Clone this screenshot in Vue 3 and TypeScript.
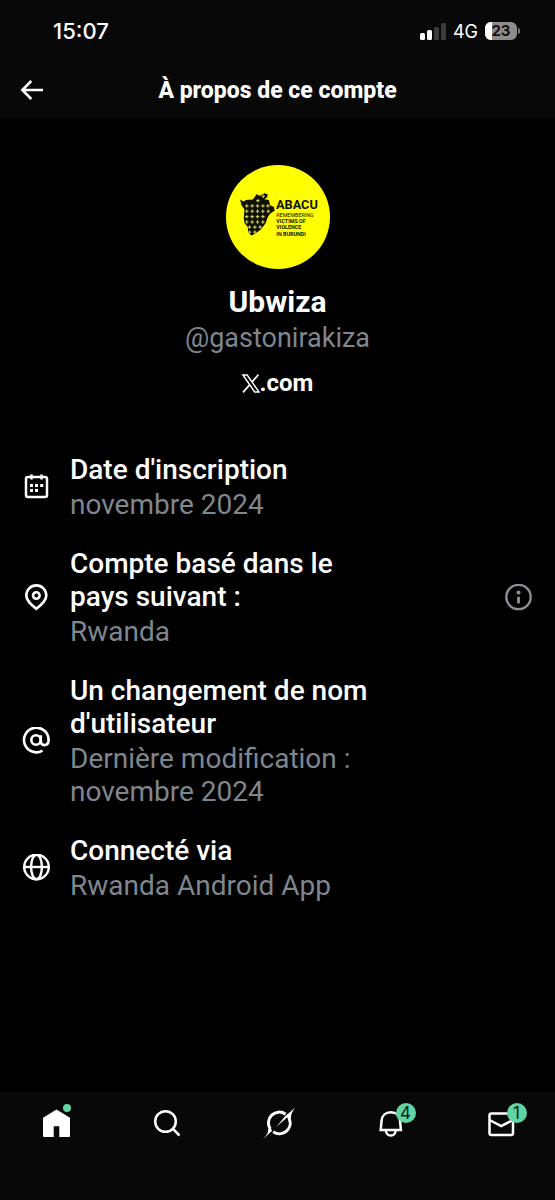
<script setup lang="ts">
interface Detail {
  icon: 'calendar' | 'pin' | 'at' | 'globe'
  title: string
  value: string
  info?: boolean
}

interface Tab {
  icon: 'home' | 'search' | 'grok' | 'bell' | 'mail'
  label: string
  badge?: number
  dot?: boolean
}

const details: Detail[] = [
  { icon: 'calendar', title: "Date d'inscription", value: 'novembre 2024' },
  { icon: 'pin', title: 'Compte basé dans le pays suivant :', value: 'Rwanda', info: true },
  { icon: 'at', title: "Un changement de nom d'utilisateur", value: 'Dernière modification : novembre 2024' },
  { icon: 'globe', title: 'Connecté via', value: 'Rwanda Android App' },
]

const tabs: Tab[] = [
  { icon: 'home', label: 'Accueil', dot: true },
  { icon: 'search', label: 'Recherche' },
  { icon: 'grok', label: 'Grok' },
  { icon: 'bell', label: 'Notifications', badge: 4 },
  { icon: 'mail', label: 'Messages', badge: 1 },
]

const battery = 23

// Centres of the small crosses printed over the map in the avatar
const crosses: [number, number][] = [
  [128, 135], [144, 122],
  [95, 151], [111, 151], [127, 151], [143, 151], [158, 151],
  [95, 167], [111, 167], [127, 167], [143, 167], [159, 167],
  [95, 183], [111, 183], [127, 183], [143, 183],
  [95, 199], [111, 199], [127, 199], [143, 199],
  [103, 214], [119, 214], [135, 214],
  [103, 229], [119, 229],
]
</script>

<template>
  <div class="screen">
    <header class="top">
      <div class="status">
        <time class="clock">15:07</time>
        <div class="signals">
          <svg class="bars" width="26" height="17" viewBox="0 0 26 17" aria-hidden="true">
            <rect x="0" y="10" width="5" height="7" rx="1.5" fill="#fff" />
            <rect x="7" y="7" width="5" height="10" rx="1.5" fill="#fff" />
            <rect x="14" y="4" width="5" height="13" rx="1.5" fill="#3c3c3c" />
            <rect x="21" y="0" width="5" height="17" rx="1.5" fill="#3c3c3c" />
          </svg>
          <span class="network">4G</span>
          <span class="battery">
            <span class="cell">
              <span class="charge" :style="{ width: battery + '%' }"></span>
              <span class="percent">{{ battery }}</span>
            </span>
            <span class="cap"></span>
          </span>
        </div>
      </div>
      <div class="bar">
        <button class="back" type="button" aria-label="Retour">
          <svg width="24" height="20" viewBox="0 0 24 20" fill="none" stroke="#fff" stroke-width="2.5">
            <path d="M11.3 1 2.3 10l9 9M2.3 10H23" />
          </svg>
        </button>
        <h1>À propos de ce compte</h1>
      </div>
    </header>

    <main class="content">
      <section class="profile">
        <svg class="avatar" viewBox="33 29 310 310" role="img" aria-label="Abacu">
          <circle cx="188" cy="184" r="155" fill="#ff0" />
          <path
            d="M75 132l10 6 8-5 20-1 5-7 6-9 10 5 14-8 9 3-1 9-9 6 14 2 3 15 12 6 2 11-12 8-8 10-7 20-14 18-14 11-14 7-10-9-1-16-10-12-2-15 2-25-9-14z"
            fill="#111100"
          />
          <path
            v-for="([x, y], i) in crosses"
            :key="i"
            :d="`M${x - 5} ${y}h10M${x} ${y - 5}v10`"
            stroke="#c9c95c"
            stroke-width="3.4"
          />
          <g class="logo-text" fill="#111100">
            <text class="logo-name" x="182" y="161">ABACU</text>
            <text class="logo-light" x="183" y="183">REMEMBERING</text>
            <text class="logo-bold" x="183" y="202">VICTIMS OF</text>
            <text class="logo-bold" x="183" y="221">VIOLENCE</text>
            <text class="logo-bold" x="183" y="240">IN BURUNDI</text>
          </g>
        </svg>
        <h2>Ubwiza</h2>
        <p class="handle">@gastonirakiza</p>
        <p class="domain">
          <svg width="18" height="19" viewBox="0 0 18 19" fill="none" stroke="#fff" aria-label="X">
            <path d="M.9 1h4.3L17 18h-4.3z" stroke-width="1.4" />
            <path d="M16.4.6 10 8.1M7.8 10.6 1 18.4" stroke-width="1.7" />
          </svg>
          <span>.com</span>
        </p>
      </section>

      <ul class="details">
        <li v-for="item in details" :key="item.title">
          <svg v-if="item.icon === 'calendar'" class="icon" viewBox="0 0 28 28" fill="none" stroke="#fff">
            <rect x="4" y="4" width="21" height="20" rx="2" stroke-width="2.5" />
            <path d="M9.500 1.500v5M19.500 1.500v5" stroke-width="2.500" />
            <path d="M8 12.500h3M13 12.500h3M18.200 12.500h3M8 17.500h3M13 17.500h3" stroke-width="2.900" />
          </svg>
          <svg v-else-if="item.icon === 'pin'" class="icon" viewBox="0 0 28 28" fill="none" stroke="#fff" stroke-width="2.600">
            <path d="M14.300 24.800C8.300 20 4.300 16.400 4.300 11.400a10 10 0 0 1 20 0c0 5-4 8.600-10 13.400z" />
            <circle cx="14.300" cy="11.500" r="3.300" />
          </svg>
          <svg v-else-if="item.icon === 'at'" class="icon" viewBox="0 0 28 28" fill="none" stroke="#fff" stroke-width="2.600">
            <circle cx="14" cy="13" r="4.700" />
            <path d="M18.800 8.300v6c0 2.500 1.500 3.800 3.500 3.800 3 0 4.300-2.400 4.300-5.100A12.300 12.300 0 1 0 20.500 23.600" />
          </svg>
          <svg v-else class="icon" viewBox="0 0 28 28" fill="none" stroke="#fff" stroke-width="2.400">
            <circle cx="14.500" cy="13" r="12.300" />
            <ellipse cx="14.500" cy="13" rx="5.400" ry="12.300" />
            <path d="M2.200 13h24.600" />
          </svg>

          <div class="text">
            <h3>{{ item.title }}</h3>
            <p>{{ item.value }}</p>
          </div>

          <button v-if="item.info" class="info" type="button" aria-label="Plus d'informations">
            <svg width="28" height="28" viewBox="0 0 28 28" fill="none" stroke="#8b9096">
              <circle cx="13.500" cy="13" r="12.200" stroke-width="2.300" />
              <circle cx="13.500" cy="8.600" r="2" fill="#8b9096" stroke="none" />
              <path d="M13.500 12.800v6.500" stroke-width="2.900" />
            </svg>
          </button>
        </li>
      </ul>
    </main>

    <nav class="tabs">
      <a v-for="tab in tabs" :key="tab.label" href="#" :aria-label="tab.label">
        <span class="glyph">
          <svg v-if="tab.icon === 'home'" viewBox="0 0 36 36" fill="#fff">
            <path d="M18.500 5.600 32 13.800V32a1 1 0 0 1-1 1h-9.700V22.300h-5.600V33H6a1 1 0 0 1-1-1V13.800z" />
          </svg>
          <svg v-else-if="tab.icon === 'search'" viewBox="0 0 36 36" fill="none" stroke="#fff" stroke-width="2.500">
            <circle cx="16.500" cy="17.500" r="10.300" />
            <path d="m23.700 24.700 6.800 6.800" />
          </svg>
          <svg v-else-if="tab.icon === 'grok'" viewBox="0 0 36 36">
            <path
              d="M10.300 25A10.800 10.800 0 0 1 25.600 10.200M29.500 15.200A10.800 10.800 0 0 1 13.200 27.800"
              fill="none"
              stroke="#fff"
              stroke-width="3"
            />
            <path d="M35.200 3.700C32.500 7.500 31 9.500 31 14.500l-2.700 2.200-1-3.500L16.500 22.700 25 12.300z" fill="#fff" />
            <path d="M3.200 35C6.300 31.300 8.500 29.500 8 25.300l2.300-1.500 1.800 3z" fill="#fff" />
          </svg>
          <svg v-else-if="tab.icon === 'bell'" viewBox="0 0 36 36" fill="none" stroke="#fff" stroke-width="2.500">
            <path d="M19.800 8.300c-5.300 0-8.900 3.300-9.200 8.400L9.700 26h20.200l-.9-9.300c-.3-5.100-3.900-8.400-9.200-8.400z" />
            <path d="M14.900 26.500c.3 3 2.100 5 4.900 5s4.600-2 4.900-5" />
          </svg>
          <svg v-else viewBox="0 0 36 36" fill="none" stroke="#fff" stroke-width="2.500">
            <rect x="7.500" y="9.500" width="23.500" height="21.500" rx="2" />
            <path d="m7.500 16 11.700 6L31 16" />
          </svg>
          <span v-if="tab.dot" class="dot"></span>
          <span v-if="tab.badge" class="badge">{{ tab.badge }}</span>
        </span>
      </a>
    </nav>
  </div>
</template>

<style>
body {
  margin: 0;
  background: #000;
}
</style>

<style scoped>
.screen {
  display: flex;
  flex-direction: column;
  min-height: 100vh;
  background: #000;
  color: #fff;
  font-family: Roboto, "Liberation Sans", sans-serif;
}

h1,
h2,
h3,
p,
ul {
  margin: 0;
  padding: 0;
}

button {
  display: flex;
  padding: 0;
  border: 0;
  background: none;
  color: inherit;
}

.top,
.tabs {
  background: #080808;
}

.status {
  display: flex;
  align-items: center;
  justify-content: space-between;
  height: 62px;
  padding: 0 35px 0 53px;
  font-family: Inter, "Liberation Sans", sans-serif;
}

.clock {
  font-size: 22px;
  font-weight: 500;
}

.signals {
  display: flex;
  align-items: center;
  gap: 7px;
}

.network {
  font-size: 18px;
}

.battery {
  display: flex;
  align-items: center;
  gap: 1px;
}

.cell {
  position: relative;
  display: grid;
  place-items: center;
  width: 32px;
  height: 18px;
  overflow: hidden;
  border-radius: 6px;
  background: #8c8c8c;
}

.charge {
  position: absolute;
  inset: 0 auto 0 0;
  background: #fff;
}

.percent {
  position: relative;
  color: #111;
  font-size: 15px;
  font-weight: 700;
  line-height: 18px;
}

.cap {
  width: 2px;
  height: 6px;
  border-radius: 0 2px 2px 0;
  background: #777;
}

.bar {
  display: grid;
  grid-template-columns: 44px 1fr 44px;
  align-items: center;
  height: 56px;
}

.back {
  justify-content: flex-end;
}

h1 {
  padding-top: 2px;
  font-size: 23px;
  font-weight: 800;
  line-height: 28px;
  text-align: center;
}

.content {
  flex: 1;
}

.profile {
  display: flex;
  flex-direction: column;
  align-items: center;
  padding-top: 47px;
}

.avatar {
  width: 104px;
  height: 104px;
}

.logo-text {
  font-family: "Liberation Sans Narrow", Roboto, sans-serif;
}

.logo-name {
  font-size: 38px;
  font-weight: 700;
}

.logo-light {
  font-size: 16px;
}

.logo-bold {
  font-size: 16px;
  font-weight: 700;
}

h2 {
  margin-top: 15px;
  font-size: 30px;
  font-weight: 700;
  line-height: 36px;
}

.handle {
  margin-top: 2px;
  color: #7f868d;
  font-size: 27px;
  line-height: 33px;
}

.domain {
  display: flex;
  align-items: center;
  margin-top: 12px;
  font-size: 24px;
  font-weight: 700;
  line-height: 33px;
}

.details {
  display: flex;
  flex-direction: column;
  gap: 26px;
  margin-top: 53px;
  padding: 0 22px;
  list-style: none;
}

.details li {
  display: flex;
  align-items: center;
}

.icon {
  flex: none;
  width: 28px;
  height: 28px;
  margin-right: 20px;
}

.text {
  max-width: 304px;
  font-size: 28px;
  line-height: 33px;
}

h3 {
  margin-bottom: 2px;
  font-size: 28px;
  font-weight: 500;
}

.text p {
  color: #7f868d;
}

.info {
  margin-left: auto;
}

.tabs {
  display: grid;
  grid-template-columns: repeat(5, 1fr);
  padding: 12px 0 60px;
}

.tabs a {
  display: flex;
  justify-content: center;
}

.glyph {
  position: relative;
  width: 36px;
  height: 36px;
}

.glyph svg {
  display: block;
  width: 36px;
  height: 36px;
}

.dot,
.badge {
  position: absolute;
  border-radius: 50%;
  background: #60d5a3;
}

.dot {
  top: 0;
  right: 3px;
  width: 8px;
  height: 8px;
}

.badge {
  top: -1px;
  right: -9px;
  width: 20px;
  height: 20px;
  color: #08251a;
  font-family: Inter, sans-serif;
  font-size: 17px;
  line-height: 20px;
  text-align: center;
}
</style>
